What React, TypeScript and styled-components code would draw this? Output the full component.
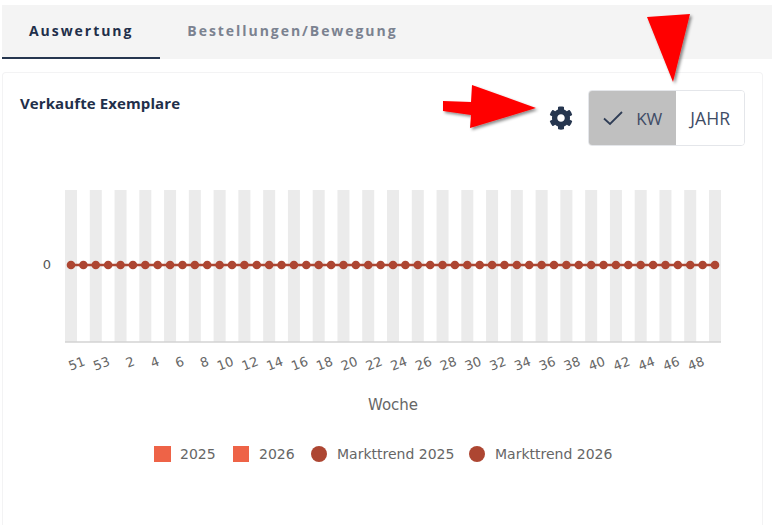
import React from "react";
import styled, { createGlobalStyle } from "styled-components";
import { FaCog } from "react-icons/fa";

const GlobalStyle = createGlobalStyle`
  html, body {
    margin: 0;
    padding: 0;
    background: #fff;
    overflow: hidden;
  }
  body {
    font-family: "Open Sans", "Liberation Sans", sans-serif;
  }
`;

const Page = styled.div`
  position: relative;
  width: 772px;
  height: 525px;
  padding: 5px 0 0 2px;
  box-sizing: border-box;
  overflow: hidden;
`;

const TabBar = styled.div`
  display: flex;
  height: 54px;
  background: #f4f4f4;
`;

const Tab = styled.div<{ $active?: boolean }>`
  display: flex;
  align-items: center;
  justify-content: center;
  box-sizing: border-box;
  height: 54px;
  padding: 0 27px 1px;
  font-size: 14px;
  font-weight: 700;
  letter-spacing: 1.95px;
  color: ${(p) => (p.$active ? "#1f2f4a" : "#7b8290")};
  border-bottom: 2px solid ${(p) => (p.$active ? "#26364f" : "transparent")};
`;

const Card = styled.div`
  margin: 13px 9px 0 0;
  height: 470px;
  background: #fff;
  border: 1px solid #f3f3f4;
  border-bottom: none;
  border-radius: 4px;
  box-sizing: border-box;
`;

const CardHeader = styled.div`
  display: flex;
  justify-content: space-between;
  align-items: flex-start;
  padding: 17px 17px 0 17px;
`;

const CardTitle = styled.h2`
  margin: 3px 0 0;
  font-size: 15px;
  line-height: 20px;
  font-weight: 700;
  letter-spacing: 0.1px;
  color: #1f2f4a;
`;

const Controls = styled.div`
  display: flex;
  align-items: center;
  gap: 15px;
`;

const SettingsIcon = styled(FaCog)`
  width: 24px;
  height: 24px;
  color: #26364f;
`;

const Toggle = styled.div`
  display: flex;
  height: 56px;
  box-sizing: border-box;
  border: 1px solid #e4e6ea;
  border-radius: 4px;
  overflow: hidden;
`;

const ToggleOption = styled.div<{ $selected?: boolean }>`
  display: flex;
  align-items: center;
  gap: 13px;
  box-sizing: border-box;
  height: 100%;
  padding: 0 14px;
  font-size: ${(p) => (p.$selected ? "17px" : "17.6px")};
  color: #3f4c66;
  background: ${(p) => (p.$selected ? "#c0c0c0" : "#fff")};
`;

const ChartFrame = styled.svg`
  display: block;
  margin-top: 0;
`;

const ArrowLayer = styled.svg`
  position: absolute;
  left: 0;
  top: 0;
  pointer-events: none;
`;

const chartFont = '"DejaVu Sans", Verdana, sans-serif';

const weeks = [51, 52, 53, ...Array.from({ length: 50 }, (_, i) => i + 1)];
const step = (715 - 71) / 52;
// chart coordinates are page coordinates moved into the svg
const originX = 3;
const originY = 146;

const Chart = () => {
  const xs = weeks.map((_, i) => 71 + i * step);
  return (
    <ChartFrame width={758} height={340} viewBox={`${originX} ${originY} 758 340`}>
      {xs.map((x, i) =>
        i % 2 === 0 ? <rect key={i} x={x - 6} y={190} width={12} height={152} fill="#ebebeb" /> : null
      )}
      <line x1={65} x2={721} y1={342} y2={342} stroke="#d3d3d3" strokeWidth={1.5} />
      <text x={51} y={269} textAnchor="end" fontFamily={chartFont} fontSize={13} fill="#555">
        0
      </text>
      <line x1={71} x2={715} y1={265} y2={265} stroke="#ad4632" strokeWidth={2.5} />
      {xs.map((x, i) => (
        <circle key={i} cx={x} cy={265} r={4.3} fill="#ad4632" />
      ))}
      {xs.map((x, i) =>
        i % 2 === 0 && i <= 50 ? (
          <text
            key={i}
            x={x + 15}
            y={365}
            textAnchor="end"
            fontFamily={chartFont}
            fontSize={13}
            fill="#666"
            transform={`rotate(-20 ${x + 15} 365)`}
          >
            {weeks[i]}
          </text>
        ) : null
      )}
      <text x={393} y={410} textAnchor="middle" fontFamily={chartFont} fontSize={15} fill="#666">
        Woche
      </text>
      <rect x={154} y={446} width={17} height={16} fill="#ee6347" />
      <text x={180} y={459} fontFamily={chartFont} fontSize={14} fill="#666">2025</text>
      <rect x={233} y={446} width={16} height={16} fill="#ee6347" />
      <text x={259} y={459} fontFamily={chartFont} fontSize={14} fill="#666">2026</text>
      <circle cx={319} cy={454} r={8} fill="#ad4632" />
      <text x={337} y={459} fontFamily={chartFont} fontSize={14} fill="#666">Markttrend 2025</text>
      <circle cx={477} cy={454} r={8} fill="#ad4632" />
      <text x={495} y={459} fontFamily={chartFont} fontSize={14} fill="#666">Markttrend 2026</text>
    </ChartFrame>
  );
};

export default function App() {
  return (
    <>
      <GlobalStyle />
      <Page>
        <TabBar>
          <Tab $active>Auswertung</Tab>
          <Tab>Bestellungen/Bewegung</Tab>
        </TabBar>
        <Card>
          <CardHeader>
            <CardTitle>Verkaufte Exemplare</CardTitle>
            <Controls>
              <SettingsIcon />
              <Toggle>
                <ToggleOption $selected>
                  <svg width="20" height="16" viewBox="0 0 20 16" fill="none" stroke="#2f3d56" strokeWidth="1.8">
                    <path d="M1 8.5 L7 14 L19 2" />
                  </svg>
                  KW
                </ToggleOption>
                <ToggleOption>JAHR</ToggleOption>
              </Toggle>
            </Controls>
          </CardHeader>
          <Chart />
        </Card>
        <ArrowLayer width={772} height={525} viewBox="0 0 772 525">
          <defs>
            <filter id="arrowShadow" x="-20%" y="-20%" width="140%" height="140%">
              <feDropShadow dx="2" dy="2" stdDeviation="1.5" floodColor="#000" floodOpacity="0.45" />
            </filter>
          </defs>
          <polygon
            points="443,101 471,102 472,85 536,108 470,128 471,115 443,111"
            fill="#ff0000"
            filter="url(#arrowShadow)"
          />
          <polygon points="647,17 690,14 673,82" fill="#ff0000" filter="url(#arrowShadow)" />
        </ArrowLayer>
      </Page>
    </>
  );
}
